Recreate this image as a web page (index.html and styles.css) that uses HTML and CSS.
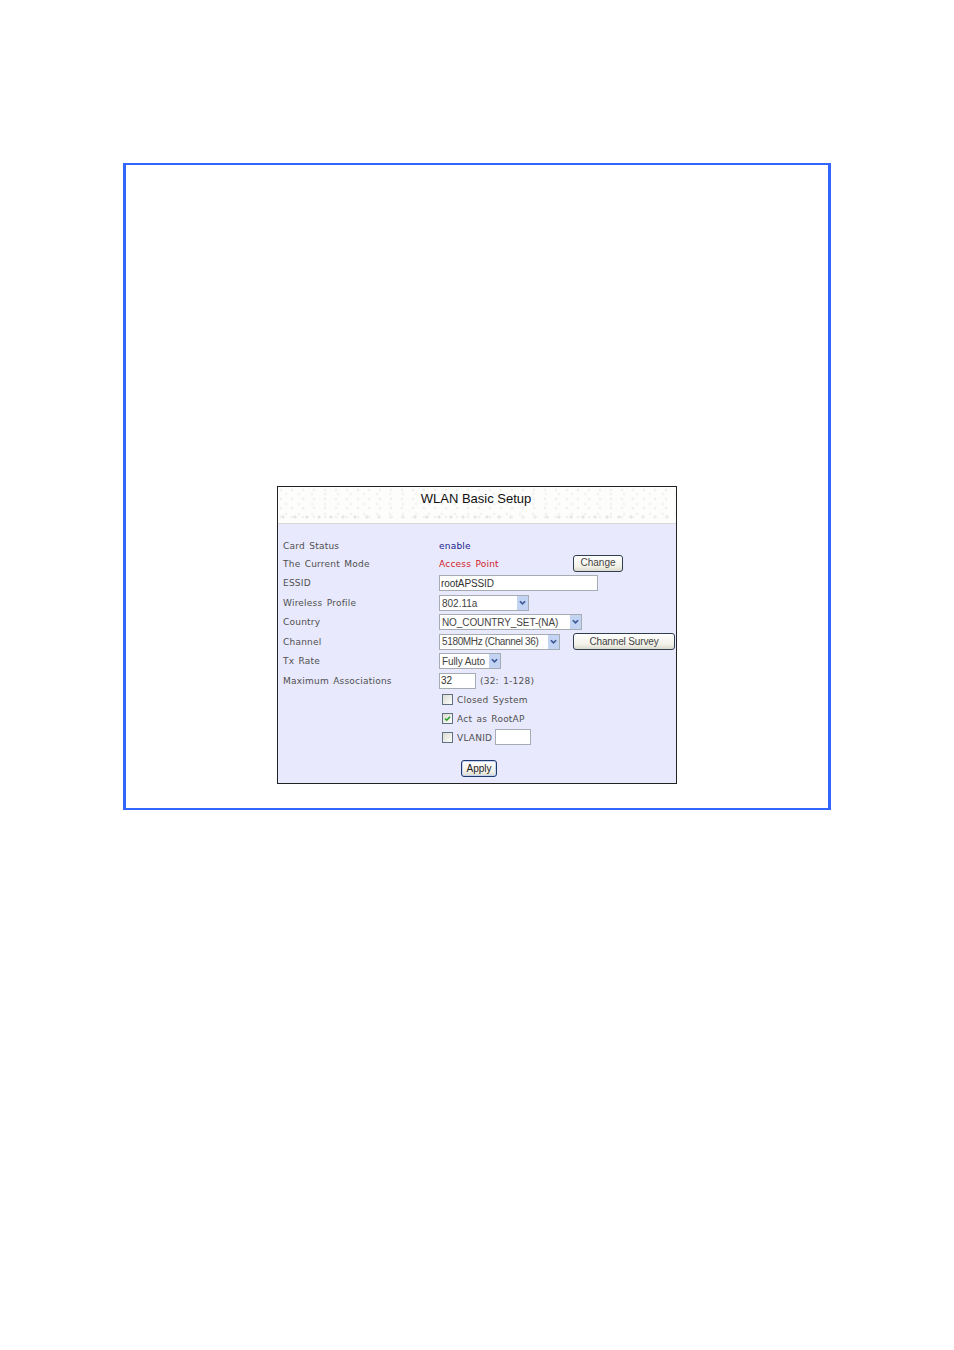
FILE: index.html
```html
<!DOCTYPE html>
<html lang="en">
<head>
<meta charset="utf-8">
<title>WLAN Basic Setup</title>
<link rel="stylesheet" href="styles.css">
</head>
<body>
<main class="figure">
  <section class="panel">
    <header class="panel-head"><h1>WLAN Basic Setup</h1></header>
    <form class="form">
      <div class="lbl">Card Status</div>
      <div class="val status-on">enable</div>
      <div></div>

      <div class="lbl">The Current Mode</div>
      <div class="val status-mode">Access Point</div>
      <div class="cell"><button type="button" class="btn btn-change">Change</button></div>

      <div class="lbl">ESSID</div>
      <div class="cell wide"><input class="txt txt-essid" type="text" value="rootAPSSID"></div>

      <div class="lbl">Wireless Profile</div>
      <div class="cell wide">
        <span class="sel sel-profile"><select><option>802.11a</option></select><svg class="arrow" viewBox="0 0 12 16"><path d="M3 6 6 9l3-3" /></svg></span>
      </div>

      <div class="lbl">Country</div>
      <div class="cell wide">
        <span class="sel sel-country"><select><option>NO_COUNTRY_SET-(NA)</option></select><svg class="arrow" viewBox="0 0 12 16"><path d="M3 6 6 9l3-3" /></svg></span>
      </div>

      <div class="lbl">Channel</div>
      <div class="cell">
        <span class="sel sel-channel"><select><option>5180MHz (Channel 36)</option></select><svg class="arrow" viewBox="0 0 12 16"><path d="M3 6 6 9l3-3" /></svg></span>
      </div>
      <div class="cell"><button type="button" class="btn btn-survey">Channel Survey</button></div>

      <div class="lbl">Tx Rate</div>
      <div class="cell wide">
        <span class="sel sel-rate"><select><option>Fully Auto</option></select><svg class="arrow" viewBox="0 0 12 16"><path d="M3 6 6 9l3-3" /></svg></span>
      </div>

      <div class="lbl">Maximum Associations</div>
      <div class="cell wide"><input class="txt txt-max" type="text" value="32"><span class="val hint">(32: 1-128)</span></div>

      <div></div>
      <div class="cell wide check"><span class="box"></span><span class="val">Closed System</span></div>

      <div></div>
      <div class="cell wide check"><span class="box"><svg viewBox="0 0 11 11"><path d="M2.5 5.5 4.6 7.6 8.6 3.4" /></svg></span><span class="val">Act as RootAP</span></div>

      <div></div>
      <div class="cell wide check"><span class="box"></span><span class="val">VLANID</span><input class="txt txt-vlan" type="text"></div>

      <div class="actions"><button type="button" class="btn btn-apply">Apply</button></div>
    </form>
  </section>
</main>
</body>
</html>
```
FILE: styles.css
```css
* { box-sizing: border-box; }
html, body { margin: 0; background: #fff; }
body { width: 954px; height: 1350px; padding: 163px 0 0 123px; }

.figure {
  width: 708px;
  height: 647px;
  border: solid #3366ff;
  border-width: 2px 3px;
  padding: 321px 0 0 151px;
}

.panel {
  width: 400px;
  height: 298px;
  border: 1px solid #222;
  background: #e8e9fc;
  display: flex;
  flex-direction: column;
}

.panel-head {
  height: 37px;
  flex: none;
  border-bottom: 1px solid #d8d8d8;
  background-color: #fdfdfc;
  background-image:
    radial-gradient(circle at 3px 3px, #f1f1ee 1px, transparent 1.8px),
    radial-gradient(circle at 8px 7px, #f3f3f1 1px, transparent 1.8px),
    radial-gradient(circle at 5px 30px, #e6e6e6 1.2px, transparent 2px);
  background-size: 11px 9px, 13px 10px, 12px 36px;
}
.panel-head h1 {
  margin: 4px 0 0 -2px;
  font: 400 13px/16px "Liberation Sans", Arial, sans-serif;
  color: #111;
  text-align: center;
}

.form {
  flex: 1;
  padding: 13px 0 0 5px;
  display: grid;
  grid-template-columns: 156px 134px 102px;
  grid-template-rows: 17px 19px 20px 19px 20px 19px 20px 19px 19px 18px 20px 1fr;
  font: 9px/12px "DejaVu Sans", Verdana, sans-serif;
  color: #505050;
}

.lbl, .val { white-space: nowrap; letter-spacing: 0.22px; word-spacing: 1.2px; }
.lbl, .form > .val { align-self: center; }
.cell { display: flex; align-items: center; min-width: 0; }
.wide { grid-column: 2 / 4; }

.status-on { color: #1a1a8c; }
.status-mode { color: #d01c2c; }

.txt {
  height: 16px;
  padding: 0 1px;
  margin: 0;
  border: 1px solid #a5acb2;
  background: #fff;
  border-radius: 0;
  font: 10px/14px "Liberation Sans", Arial, sans-serif;
  letter-spacing: -0.1px;
  color: #333;
  outline: none;
}
.txt-essid { width: 159px; }
.txt-max { width: 37px; }
.txt-vlan { width: 36px; margin-left: 3px; }
.hint { margin-left: 4px; }

.sel { position: relative; display: block; height: 16px; }
.sel select {
  appearance: none;
  -webkit-appearance: none;
  width: 100%;
  height: 100%;
  display: block;
  margin: 0;
  padding: 1px 0 0 2px;
  border: 1px solid #a5acb2;
  border-radius: 0;
  background: #fff;
  font: 10px/14px "Liberation Sans", Arial, sans-serif;
  color: #444;
  outline: none;
}
.arrow {
  position: absolute;
  top: 1px;
  right: 1px;
  width: 11px;
  height: 14px;
  background: #c3d3f3;
  pointer-events: none;
}
.arrow path { fill: none; stroke: #3d5a98; stroke-width: 2; }
.sel-profile { width: 90px; }
.sel-country { width: 143px; }
.sel-country select { letter-spacing: -0.1px; }
.sel-channel { width: 121px; }
.sel-channel select { letter-spacing: -0.35px; padding-top: 0; }
.sel-rate { width: 62px; }
.sel-rate select { letter-spacing: -0.1px; }

.btn {
  margin: 0;
  padding: 0;
  height: 17px;
  border: 1px solid #2f3f50;
  border-radius: 3px;
  background: linear-gradient(#ffffff, #f2f1e8 70%, #dcdace);
  font: 10px/14px "Liberation Sans", Arial, sans-serif;
  color: #444;
}
.btn-change { width: 50px; padding-bottom: 1px; }
.btn-survey { width: 102px; letter-spacing: -0.15px; }
.btn-apply {
  width: 36px;
  border-color: #1f3a6e;
  box-shadow: inset 0 0 0 1px #c4d4f0;
  color: #222;
}

.check { padding-left: 3px; }
.check .val { padding-top: 1px; }
.box {
  flex: none;
  width: 11px;
  height: 11px;
  margin-right: 4px;
  border: 1px solid #5f7080;
  background: linear-gradient(135deg, #dcdcd4, #fdfdfb);
  display: block;
}
.box svg { display: block; width: 9px; height: 9px; }
.box path { fill: none; stroke: #21a121; stroke-width: 1.8; }

.actions {
  grid-column: 1 / 4;
  padding: 13px 0 0 178px;
}
```
